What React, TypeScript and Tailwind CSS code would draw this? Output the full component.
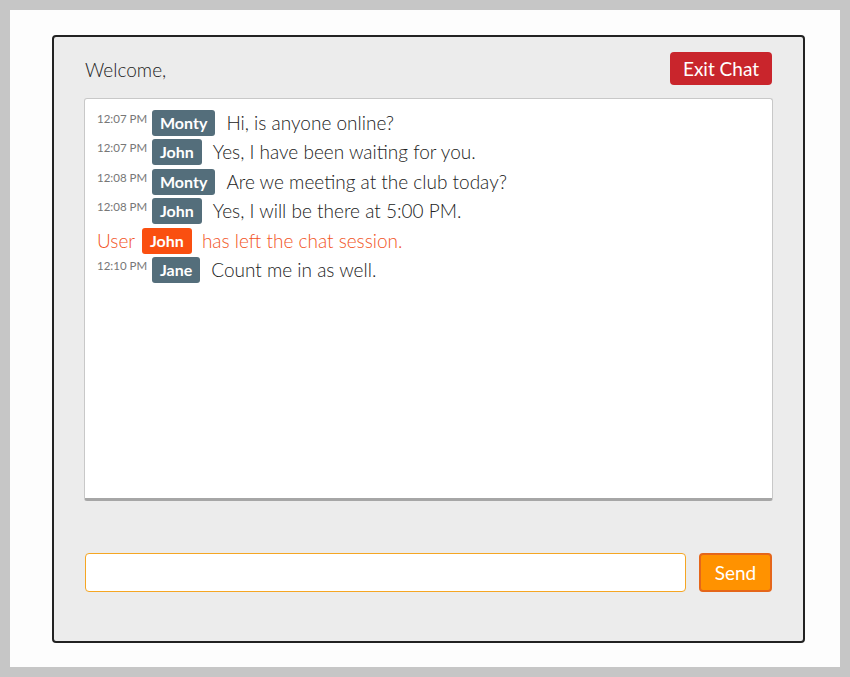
import React from "react";

type Msg =
  | { kind: "msg"; time: string; user: string; text: string }
  | { kind: "left"; user: string };

const messages: Msg[] = [
  { kind: "msg", time: "12:07 PM", user: "Monty", text: "Hi, is anyone online?" },
  { kind: "msg", time: "12:07 PM", user: "John", text: "Yes, I have been waiting for you." },
  { kind: "msg", time: "12:08 PM", user: "Monty", text: "Are we meeting at the club today?" },
  { kind: "msg", time: "12:08 PM", user: "John", text: "Yes, I will be there at 5:00 PM." },
  { kind: "left", user: "John" },
  { kind: "msg", time: "12:10 PM", user: "Jane", text: "Count me in as well." },
];

export default function App() {
  return (
    <div
      className="w-[850px] h-[677px] bg-[#c6c6c6] p-[10px]"
      style={{ fontFamily: "Lato, 'Open Sans', sans-serif" }}
    >
      <div className="w-[830px] h-[657px] bg-[#fdfdfd] pt-[25px] pl-[42px]">
        <div className="w-[753px] h-[608px] border-2 border-[#222] rounded-[4px] bg-[#ececec] pt-[15px] px-[30px] flex flex-col">
          <div className="flex items-center justify-between h-[33px] pl-[1px] pr-[1px]">
            <span className="text-[19px] font-light text-[#222] mt-[3px]">Welcome,</span>
            <button className="h-[33px] w-[102px] rounded-[4px] bg-[#c9252c] text-white text-[19px] leading-none">
              Exit Chat
            </button>
          </div>
          <div className="mt-[13px] h-[403px] bg-white border border-[#c8c8c8] border-b-[3px] border-b-[#a6a6a6] rounded-[3px] pt-[11px] pl-[12px]">
            {messages.map((m, i) =>
              m.kind === "msg" ? (
                <div key={i} className="flex items-start h-[29.4px]">
                  <span className="text-[11.5px] text-[#777] w-[55px] mt-[3px] leading-none">
                    {m.time}
                  </span>
                  <span className="h-[26px] px-[8px] rounded-[3px] bg-[#546e7b] text-white font-bold text-[16px] leading-[26px]">
                    {m.user}
                  </span>
                  <span className="ml-[11px] text-[19px] font-light text-[#222] leading-[26px]">{m.text}</span>
                </div>
              ) : (
                <div key={i} className="flex items-start h-[29.4px] text-[#f25424] text-[19px] font-light">
                  <span className="leading-[26px]">User</span>
                  <span className="ml-[7px] h-[26px] px-[8px] rounded-[3px] bg-[#fa4f10] text-white font-bold text-[16px] leading-[26px]">
                    {m.user}
                  </span>
                  <span className="ml-[10px] leading-[26px]">has left the chat session.</span>
                </div>
              )
            )}
          </div>
          <div className="mt-[52px] flex items-center gap-[13px] pl-[1px]">
            <input className="w-[601px] h-[39px] bg-white border border-[#f5a623] rounded-[4px] outline-none" />
            <button className="w-[73px] h-[39px] bg-[#ff9200] border-2 border-[#e5661a] rounded-[4px] text-white text-[19px] leading-none">
              Send
            </button>
          </div>
        </div>
      </div>
    </div>
  );
}
